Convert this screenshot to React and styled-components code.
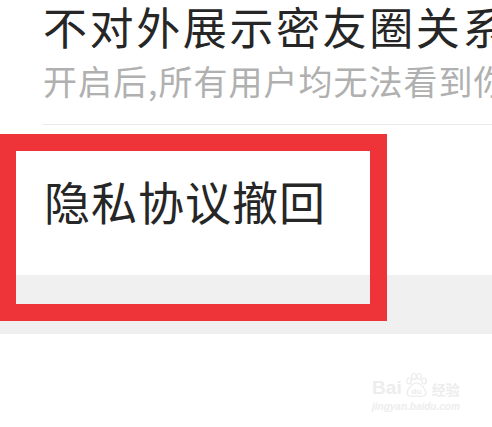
import styled, { createGlobalStyle } from "styled-components";

const GlobalStyle = createGlobalStyle`
  html, body {
    margin: 0;
    padding: 0;
    background: #ffffff;
  }
  body {
    font-family: "Noto Sans CJK SC", "Noto Sans", sans-serif;
  }
`;

const Screen = styled.div`
  position: relative;
  width: 492px;
  height: 427px;
  overflow: hidden;
  background: #ffffff;
`;

const SettingItem = styled.div`
  padding-left: 43px;
  padding-bottom: 14px;
  overflow: hidden;
`;

const Title = styled.div`
  font-size: 44px;
  line-height: 52px;
  letter-spacing: 2.6px;
  color: #262626;
  white-space: nowrap;
`;

const Subtitle = styled.div`
  font-size: 34px;
  line-height: 58px;
  letter-spacing: 1px;
  color: #b0b0b0;
  white-space: nowrap;
`;

const Divider = styled.div`
  height: 1px;
  margin-left: 42px;
  background: #ebebeb;
`;

const Row = styled.div`
  height: 150px;
  display: flex;
  align-items: center;
  padding-left: 44px;
  font-size: 46px;
  letter-spacing: 1px;
  color: #262626;
`;

const GrayBand = styled.div`
  height: 59px;
  background: #f0f0f0;
`;

const Highlight = styled.div`
  position: absolute;
  left: -1px;
  top: 134px;
  width: 388px;
  height: 187px;
  box-sizing: border-box;
  border: 17px solid #ee3438;
`;

const Watermark = styled.div`
  position: absolute;
  left: 372px;
  top: 372px;
  display: flex;
  flex-direction: column;
  align-items: center;
  color: #ededed;
  font-family: "Liberation Sans", Arial, sans-serif;
`;

const MarkLine = styled.div`
  display: flex;
  align-items: flex-end;
  gap: 1px;
  font-size: 19px;
  font-weight: bold;
  line-height: 20px;
`;

const MarkUrl = styled.div`
  font-size: 10px;
  font-style: italic;
  font-weight: bold;
  line-height: 12px;
  margin-top: 3px;
`;

const MarkCjk = styled.span`
  font-family: "Noto Sans CJK SC", sans-serif;
  font-size: 14px;
  line-height: 18px;
  margin-left: 2px;
`;

function Paw() {
  return (
    <svg width="26" height="26" viewBox="0 0 26 26" fill="none" stroke="#ebebeb" strokeWidth="1.2">
      <ellipse cx="6" cy="9" rx="2.3" ry="3" />
      <ellipse cx="11" cy="4.5" rx="2.3" ry="3" />
      <ellipse cx="16" cy="4.5" rx="2.3" ry="3" />
      <ellipse cx="21" cy="9" rx="2.3" ry="3" />
      <path d="M13.5 11 C9 11 4 18 4 21 C4 24 8 25 13.5 24 C19 25 23 24 23 21 C23 18 18 11 13.5 11 Z" />
      <text x="13.5" y="21.5" textAnchor="middle" fontSize="8" fontWeight="bold" fill="#ebebeb" stroke="none" fontFamily="Liberation Sans, sans-serif">du</text>
    </svg>
  );
}

export default function App() {
  return (
    <Screen>
      <GlobalStyle />
      <SettingItem>
        <Title>不对外展示密友圈关系</Title>
        <Subtitle>开启后,所有用户均无法看到你的密友圈</Subtitle>
      </SettingItem>
      <Divider />
      <Row>隐私协议撤回</Row>
      <GrayBand />
      <Highlight />
      <Watermark>
        <MarkLine>
          <span>Bai</span>
          <Paw />
          <MarkCjk>经验</MarkCjk>
        </MarkLine>
        <MarkUrl>jingyan.baidu.com</MarkUrl>
      </Watermark>
    </Screen>
  );
}
